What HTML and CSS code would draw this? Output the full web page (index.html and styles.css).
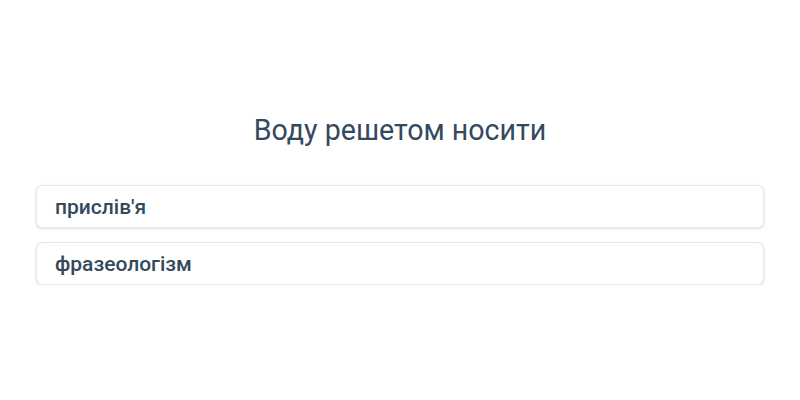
FILE: index.html
```html
<!DOCTYPE html>
<html lang="uk">
<head>
<meta charset="utf-8">
<link rel="stylesheet" href="styles.css">
</head>
<body>
<main class="quiz">
  <h1 class="question">Воду решетом носити</h1>
  <div class="options">
    <div class="option">прислів'я</div>
    <div class="option">фразеологізм</div>
  </div>
</main>
</body>
</html>
```
FILE: styles.css
```css
html, body {
  margin: 0;
  padding: 0;
  background: #ffffff;
}
body {
  font-family: Roboto, "Noto Sans", sans-serif;
  color: #34495e;
}
.quiz {
  padding: 113px 36px 0;
  display: flex;
  flex-direction: column;
}
.question {
  margin: 0;
  font-size: 28.6px;
  font-weight: 400;
  line-height: 34px;
  text-align: center;
  color: #34495e;
}
.options {
  margin-top: 38px;
  display: flex;
  flex-direction: column;
  gap: 14px;
}
.option {
  height: 43px;
  box-sizing: border-box;
  padding: 0 18px;
  display: flex;
  align-items: center;
  background: #fff;
  border: 1px solid #e6e6e6;
  border-radius: 6px;
  box-shadow: 0 1px 3px rgba(0,0,0,0.12);
  font-size: 21px;
  font-weight: 500;
  color: #34495e;
}
```
